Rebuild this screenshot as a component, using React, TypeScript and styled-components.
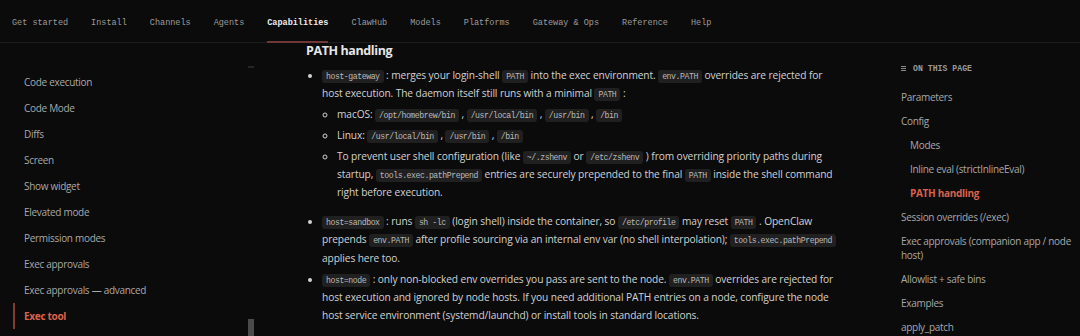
import { createGlobalStyle, styled } from "styled-components";

const GlobalStyle = createGlobalStyle`
  html, body {
    margin: 0;
    padding: 0;
    background: #0b0b0b;
    overflow: hidden;
  }
`;

const Page = styled.div`
  width: 1080px;
  height: 336px;
  display: flex;
  flex-direction: column;
  overflow: hidden;
  background: #0b0b0b;
  font-family: "Open Sans", "Noto Sans", sans-serif;
`;

const TopNav = styled.nav`
  height: 42px;
  flex: none;
  display: flex;
  gap: 23px;
  padding-left: 12px;
  border-bottom: 1px solid #1c1c1c;
`;

const Tab = styled.a<{ $active?: boolean }>`
  display: flex;
  align-items: center;
  padding-top: 4px;
  margin-bottom: -1px;
  border-bottom: 2px solid ${(p) => (p.$active ? "#6d3836" : "transparent")};
  font-family: "Liberation Mono", monospace;
  font-size: 8.5px;
  font-weight: ${(p) => (p.$active ? 700 : 400)};
  color: ${(p) => (p.$active ? "#ececec" : "#9c9c9c")};
  white-space: nowrap;
`;

const Body = styled.div`
  flex: 1;
  min-height: 0;
  display: grid;
  grid-template-columns: 256px 624px 200px;
`;

const Sidebar = styled.aside`
  display: flex;
  min-height: 0;
`;

const SideList = styled.ul`
  flex: 1;
  list-style: none;
  margin: 0;
  padding: 26px 0 0;
`;

const SideItem = styled.li<{ $active?: boolean }>`
  height: 26px;
  line-height: 26px;
  margin-left: 13px;
  padding-left: 9px;
  border-left: 2px solid ${(p) => (p.$active ? "#87392e" : "transparent")};
  font-size: 10px;
  letter-spacing: -0.3px;
  font-weight: ${(p) => (p.$active ? 700 : 400)};
  color: ${(p) => (p.$active ? "#dc614b" : "#a9a9a9")};
  white-space: nowrap;
`;

const Rail = styled.div`
  width: 6px;
  margin-right: 2px;
  display: flex;
  flex-direction: column;
  justify-content: space-between;
`;

const RailTick = styled.div`
  height: 2px;
  margin-top: 23px;
  background: #262626;
`;

const RailThumb = styled.div`
  height: 20px;
  background: #4b4b4b;
`;

const Main = styled.main`
  padding: 0 38px 0 50px;
  color: #d2d2d2;
  font-size: 10.2px;
  letter-spacing: -0.1px;
  line-height: 18.3px;
`;

const Heading = styled.h2`
  margin: 0 0 7px;
  font-size: 12.5px;
  letter-spacing: -0.4px;
  line-height: 16px;
  font-weight: 700;
  color: #e6e6e6;
`;

const List = styled.ul`
  margin: 0;
  padding-left: 16px;
  list-style: disc;

  & > li + li {
    margin-top: 2.8px;
  }
`;

const SubList = styled.ul`
  margin: 2.5px 0 10.5px;
  padding-left: 15px;
  list-style: circle;

  & > li + li {
    margin-top: 2.5px;
  }
`;

const Code = styled.code`
  padding: 2px 4px;
  border-radius: 3px;
  background: #202020;
  color: #bababa;
  font-family: "Liberation Mono", monospace;
  font-size: 8.2px;
  line-height: 1;
  letter-spacing: -0.45px;
`;

const Toc = styled.aside`
  padding-left: 21px;
  padding-right: 4px;
`;

const TocTitle = styled.div`
  display: flex;
  align-items: center;
  gap: 7px;
  margin-top: 19px;
  height: 12px;
  font-family: "Liberation Mono", monospace;
  font-size: 8.2px;
  font-weight: 700;
  color: #9a9a9a;
`;

const TocList = styled.ul`
  list-style: none;
  margin: 11px 0 0;
  padding: 0;
`;

const TocItem = styled.li<{ $nested?: boolean; $active?: boolean }>`
  padding: 5px 0 5px ${(p) => (p.$nested ? "9px" : "0")};
  font-size: 10px;
  letter-spacing: -0.3px;
  line-height: 14px;
  font-weight: ${(p) => (p.$active ? 700 : 400)};
  color: ${(p) => (p.$active ? "#dc614b" : "#a8a8a8")};
`;

const tabs = [
  "Get started",
  "Install",
  "Channels",
  "Agents",
  "Capabilities",
  "ClawHub",
  "Models",
  "Platforms",
  "Gateway & Ops",
  "Reference",
  "Help",
];

const sideItems = [
  "Code execution",
  "Code Mode",
  "Diffs",
  "Screen",
  "Show widget",
  "Elevated mode",
  "Permission modes",
  "Exec approvals",
  "Exec approvals — advanced",
  "Exec tool",
];

const tocItems: { label: string; nested?: boolean; active?: boolean }[] = [
  { label: "Parameters" },
  { label: "Config" },
  { label: "Modes", nested: true },
  { label: "Inline eval (strictInlineEval)", nested: true },
  { label: "PATH handling", nested: true, active: true },
  { label: "Session overrides (/exec)" },
  { label: "Exec approvals (companion app / node host)" },
  { label: "Allowlist + safe bins" },
  { label: "Examples" },
  { label: "apply_patch" },
];

function ListIcon() {
  return (
    <svg width="5" height="5" viewBox="0 0 5 5">
      <rect x="0" y="0" width="5" height="1" fill="#8a8a8a" />
      <rect x="0" y="2" width="5" height="1" fill="#8a8a8a" />
      <rect x="0" y="4" width="5" height="1" fill="#8a8a8a" />
    </svg>
  );
}

export default function App() {
  return (
    <Page>
      <GlobalStyle />
      <TopNav>
        {tabs.map((t) => (
          <Tab key={t} $active={t === "Capabilities"}>
            {t}
          </Tab>
        ))}
      </TopNav>
      <Body>
        <Sidebar>
          <SideList>
            {sideItems.map((s) => (
              <SideItem key={s} $active={s === "Exec tool"}>
                {s}
              </SideItem>
            ))}
          </SideList>
          <Rail>
            <RailTick />
            <RailThumb />
          </Rail>
        </Sidebar>

        <Main>
          <Heading>PATH handling</Heading>
          <List>
            <li>
              <Code>host-gateway</Code> : merges your login-shell <Code>PATH</Code> into the exec
              environment. <Code>env.PATH</Code> overrides are rejected for host execution. The
              daemon itself still runs with a minimal <Code>PATH</Code> :
              <SubList>
                <li>
                  macOS: <Code>/opt/homebrew/bin</Code> , <Code>/usr/local/bin</Code> ,{" "}
                  <Code>/usr/bin</Code> , <Code>/bin</Code>
                </li>
                <li>
                  Linux: <Code>/usr/local/bin</Code> , <Code>/usr/bin</Code> , <Code>/bin</Code>
                </li>
                <li>
                  To prevent user shell configuration (like <Code>~/.zshenv</Code> or{" "}
                  <Code>/etc/zshenv</Code> ) from overriding priority paths during startup,{" "}
                  <Code>tools.exec.pathPrepend</Code> entries are securely prepended to the final{" "}
                  <Code>PATH</Code> inside the shell command right before execution.
                </li>
              </SubList>
            </li>
            <li>
              <Code>host=sandbox</Code> : runs <Code>sh -lc</Code> (login shell) inside the
              container, so <Code>/etc/profile</Code> may reset <Code>PATH</Code> . OpenClaw
              prepends <Code>env.PATH</Code> after profile sourcing via an internal env var (no
              shell interpolation); <Code>tools.exec.pathPrepend</Code> applies here too.
            </li>
            <li>
              <Code>host=node</Code> : only non-blocked env overrides you pass are sent to the
              node. <Code>env.PATH</Code> overrides are rejected for host execution and ignored by
              node hosts. If you need additional PATH entries on a node, configure the node host
              service environment (systemd/launchd) or install tools in standard locations.
            </li>
          </List>
        </Main>

        <Toc>
          <TocTitle>
            <ListIcon />
            ON THIS PAGE
          </TocTitle>
          <TocList>
            {tocItems.map((i) => (
              <TocItem key={i.label} $nested={i.nested} $active={i.active}>
                {i.label}
              </TocItem>
            ))}
          </TocList>
        </Toc>
      </Body>
    </Page>
  );
}
